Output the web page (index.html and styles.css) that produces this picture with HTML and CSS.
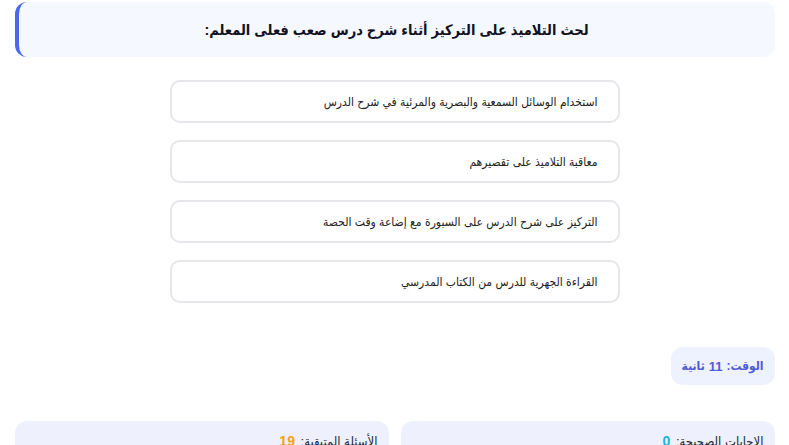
FILE: index.html
```html
<!DOCTYPE html>
<html lang="ar" dir="rtl">
<head>
<meta charset="utf-8">
<title>اختبار</title>
<link rel="stylesheet" href="styles.css">
</head>
<body>
<div class="quiz">
  <div class="question">لحث التلاميذ على التركيز أثناء شرح درس صعب فعلى المعلم:</div>
  <div class="options">
    <div class="option">استخدام الوسائل السمعية والبصرية والمرئية في شرح الدرس</div>
    <div class="option">معاقبة التلاميذ على تقصيرهم</div>
    <div class="option">التركيز على شرح الدرس على السبورة مع إضاعة وقت الحصة</div>
    <div class="option">القراءة الجهرية للدرس من الكتاب المدرسي</div>
  </div>
  <div class="timer-row">
    <div class="timer">الوقت: <b>11</b> ثانية</div>
  </div>
  <div class="stats">
    <div class="stat">الإجابات الصحيحة: <b class="correct">0</b></div>
    <div class="stat">الأسئلة المتبقية: <b class="remaining">19</b></div>
  </div>
</div>
</body>
</html>
```
FILE: styles.css
```css
* { box-sizing: border-box; }
html, body { margin: 0; padding: 0; background: #ffffff; }
body {
  font-family: "Liberation Sans", "DejaVu Sans Condensed", "DejaVu Sans", Arial, sans-serif;
  color: #1f2937;
}
.quiz {
  width: 760px;
  margin: 2px auto 0;
  display: flex;
  flex-direction: column;
}
.question {
  height: 55px;
  background: #f5f8ff;
  border-radius: 12px;
  border-left: 4px solid #4a67f0;
  display: flex;
  align-items: center;
  justify-content: center;
  font-size: 14.5px;
  font-weight: bold;
  color: #111122;
}
.options {
  width: 450px;
  margin: 23px auto 0;
  display: flex;
  flex-direction: column;
  gap: 17px;
}
.option {
  height: 43px;
  border: 2px solid #e5e7eb;
  border-radius: 10px;
  padding: 0 20px;
  display: flex;
  align-items: center;
  font-size: 12px;
  color: #222;
  background: #fff;
}
.timer-row {
  margin-top: 44px;
  display: flex;
}
.timer {
  height: 38px;
  padding: 0 11px;
  background: #eef2ff;
  border-radius: 12px;
  display: flex;
  align-items: center;
  font-size: 12px;
  font-weight: bold;
  color: #4f5bd5;
}
.timer b { margin: 0 4px; font-size: 13px; }
.stats {
  margin-top: 36px;
  display: grid;
  grid-template-columns: 1fr 1fr;
  gap: 12px;
}
.stat {
  height: 60px;
  background: #eef1fd;
  border-radius: 12px;
  padding: 12px 11px;
  font-size: 13px;
  color: #1f2937;
}
.stat b { font-size: 14px; margin-right: 2px; }
.correct { color: #17b3d8; }
.remaining { color: #f5a020; }
```
